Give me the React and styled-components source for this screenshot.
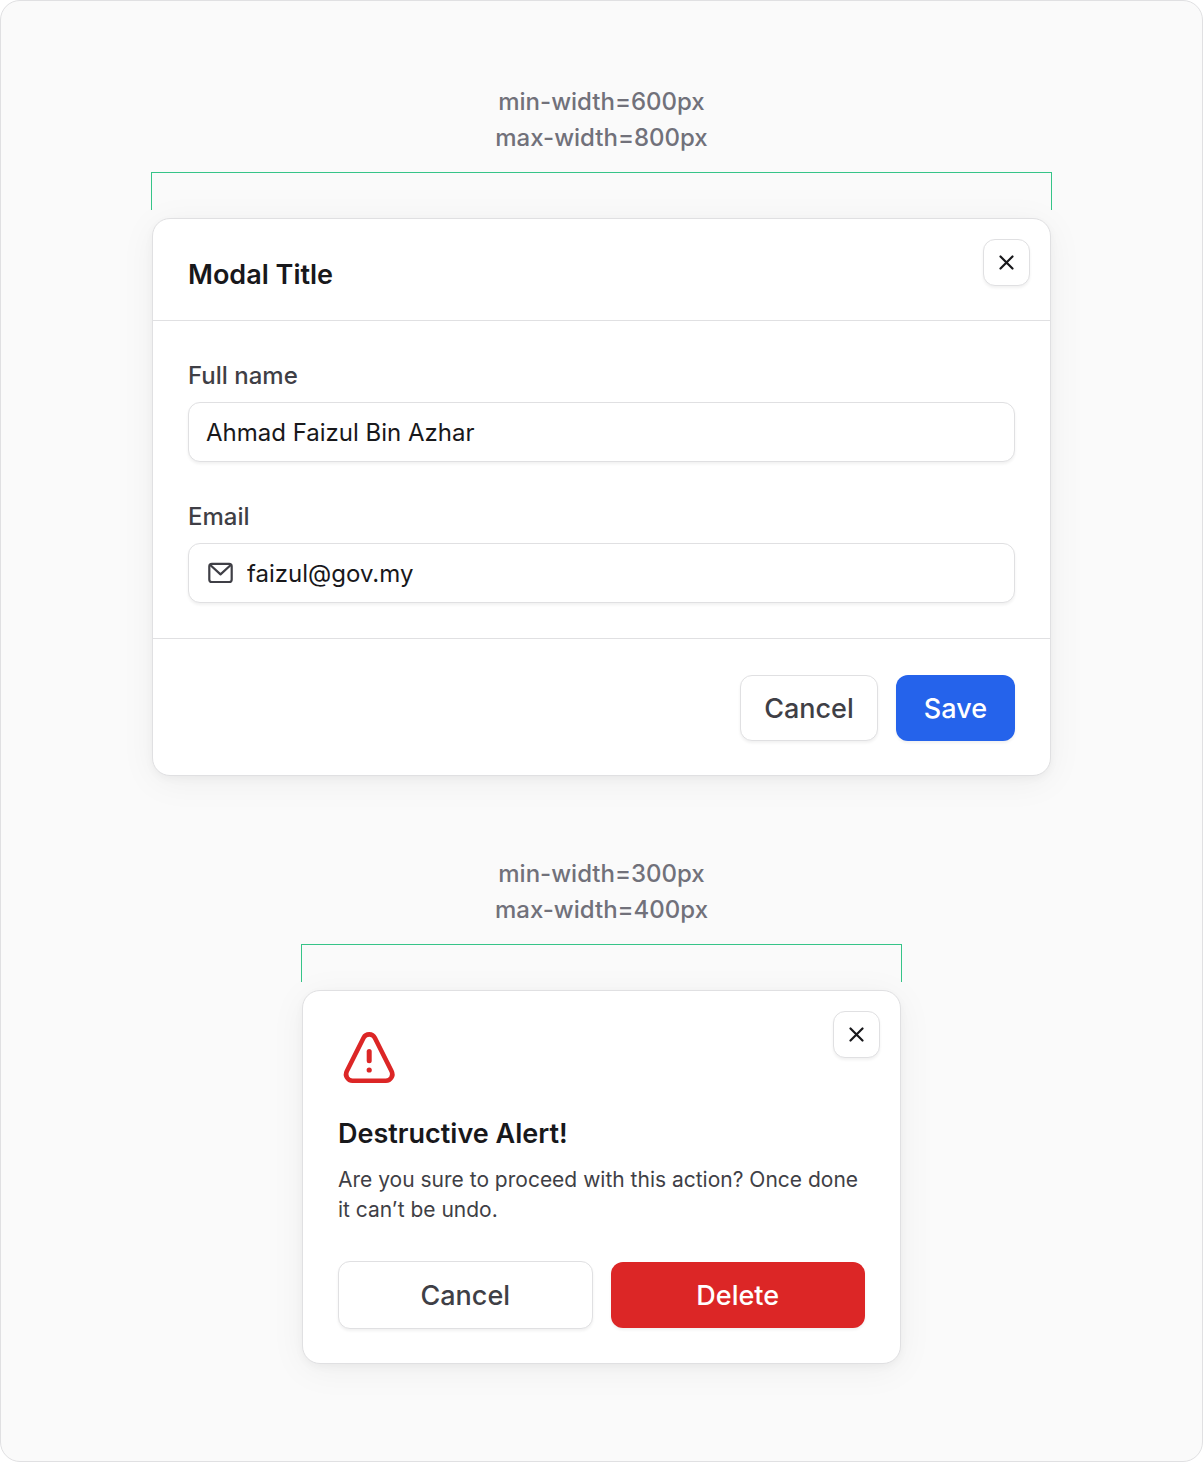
import { useState } from 'react'
import styled, { createGlobalStyle } from 'styled-components'

export default function App() {
  const [fullName, setFullName] = useState('Ahmad Faizul Bin Azhar')
  const [email, setEmail] = useState('faizul@gov.my')

  return (
    <>
      <GlobalStyle />
      <Frame>
        <Spec $width={901}>
          <SpecText>
            min-width=600px
            <br />
            max-width=800px
          </SpecText>
          <Bracket />
          <Card role="dialog" aria-labelledby="modal-title">
            <ModalHeader>
              <ModalTitle id="modal-title">Modal Title</ModalTitle>
              <CloseButton />
            </ModalHeader>
            <ModalBody>
              <Field>
                <Label htmlFor="full-name">Full name</Label>
                <InputBox>
                  <Input
                    id="full-name"
                    type="text"
                    value={fullName}
                    onChange={(e) => setFullName(e.target.value)}
                  />
                </InputBox>
              </Field>
              <Field>
                <Label htmlFor="email">Email</Label>
                <InputBox>
                  <MailIcon />
                  <Input
                    id="email"
                    type="email"
                    value={email}
                    onChange={(e) => setEmail(e.target.value)}
                  />
                </InputBox>
              </Field>
            </ModalBody>
            <ModalFooter>
              <OutlineButton type="button">Cancel</OutlineButton>
              <SolidButton type="button" $color="#2563eb">Save</SolidButton>
            </ModalFooter>
          </Card>
        </Spec>

        <Spec $width={601}>
          <SpecText>
            min-width=300px
            <br />
            max-width=400px
          </SpecText>
          <Bracket />
          <Card role="alertdialog" aria-labelledby="alert-title" aria-describedby="alert-text">
            <AlertHeader>
              <WarningIcon />
              <CloseButton />
            </AlertHeader>
            <AlertBody>
              <Title id="alert-title">Destructive Alert!</Title>
              <AlertText id="alert-text">
                Are you sure to proceed with this action? Once done it can’t be undo.
              </AlertText>
              <AlertActions>
                <OutlineButton type="button" $tall>Cancel</OutlineButton>
                <SolidButton type="button" $color="#dc2626">Delete</SolidButton>
              </AlertActions>
            </AlertBody>
          </Card>
        </Spec>
      </Frame>
    </>
  )
}

function CloseButton() {
  return (
    <IconButton type="button" aria-label="Close">
      <svg width="15" height="15" viewBox="0 0 15 15" fill="none" aria-hidden="true">
        <path
          d="M1.5 1.5L13.5 13.5M13.5 1.5L1.5 13.5"
          stroke="#18181b"
          strokeWidth="2.2"
          strokeLinecap="round"
        />
      </svg>
    </IconButton>
  )
}

function MailIcon() {
  return (
    <Icon width="30" height="30" viewBox="0 0 30 30" fill="none" aria-hidden="true">
      <g stroke="#3f3f46" strokeWidth="2.2" strokeLinejoin="round">
        <rect x="3.3" y="5.8" width="22.4" height="18.2" rx="2.6" />
        <path d="M4 6.8L14.5 16.4L25 6.8" />
      </g>
    </Icon>
  )
}

function WarningIcon() {
  return (
    <AlertIcon width="63" height="63" viewBox="0 0 63 63" fill="none" aria-hidden="true">
      <path
        d="M25.6 10.8L8.8 44.2A6.5 6.5 0 0 0 14.6 53.7H47.8A6.5 6.5 0 0 0 53.6 44.2L36.8 10.8A6.3 6.3 0 0 0 25.6 10.8Z"
        stroke="#dc2626"
        strokeWidth="4.6"
      />
      <path d="M31.2 24.6V33.8" stroke="#dc2626" strokeWidth="5" strokeLinecap="round" />
      <circle cx="31.2" cy="43" r="2.6" fill="#dc2626" />
    </AlertIcon>
  )
}

const GlobalStyle = createGlobalStyle`
  *, *::before, *::after {
    box-sizing: border-box;
  }
  body {
    margin: 0;
    background: #fff;
    color: #18181b;
    font-family: Inter, sans-serif;
  }
  h2, p {
    margin: 0;
  }
`
const Frame = styled.main`
  display: flex;
  flex-direction: column;
  align-items: center;
  gap: 80px;
  padding: 83px 24px 97px;
  border: 1px solid #e0e0e2;
  border-radius: 20px;
  background: #fafafa;
`
const Spec = styled.section`
  width: 100%;
  max-width: ${(props) => props.$width}px;
`
const SpecText = styled.p`
  color: #71717a;
  font-size: 24px;
  font-weight: 500;
  line-height: 36px;
  text-align: center;
`
const Bracket = styled.div`
  height: 38px;
  margin: 16px 0 8px;
  border: 1px solid #36c488;
  border-bottom: 0;
`
const Card = styled.div`
  margin: 0 1px;
  border: 1px solid #e0e0e2;
  border-radius: 18px;
  background: #fff;
  box-shadow: 0 6px 36px rgba(0, 0, 0, 0.05), 0 3px 9px rgba(0, 0, 0, 0.04);
`
const ModalHeader = styled.header`
  display: flex;
  align-items: flex-start;
  justify-content: space-between;
  padding: 20px 20px 25px 35px;
  border-bottom: 1px solid #e0e0e2;
`
const Title = styled.h2`
  font-size: 27px;
  font-weight: 600;
  line-height: 40px;
`
const ModalTitle = styled(Title)`
  margin-top: 16px;
`
const IconButton = styled.button`
  display: flex;
  align-items: center;
  justify-content: center;
  width: 47px;
  height: 47px;
  padding: 0;
  border: 1px solid #e0e0e2;
  border-radius: 12px;
  background: #fff;
  box-shadow: 0 2px 3px rgba(0, 0, 0, 0.06);
  cursor: pointer;
`
const ModalBody = styled.div`
  display: flex;
  flex-direction: column;
  gap: 37px;
  padding: 37px 35px 35px;
`
const Field = styled.div`
  display: flex;
  flex-direction: column;
  gap: 8px;
`
const Label = styled.label`
  color: #3f3f46;
  font-size: 24px;
  font-weight: 500;
  line-height: 36px;
`
const InputBox = styled.div`
  display: flex;
  align-items: center;
  gap: 11px;
  height: 60px;
  padding: 0 17px;
  border: 1px solid #e0e0e2;
  border-radius: 12px;
  background: #fff;
  box-shadow: 0 2px 3px rgba(0, 0, 0, 0.06);
`
const Input = styled.input`
  flex: 1;
  min-width: 0;
  padding: 2px 0 0;
  border: 0;
  outline: 0;
  background: transparent;
  color: #18181b;
  font-family: inherit;
  font-size: 24px;
  line-height: 36px;
`
const Icon = styled.svg`
  flex-shrink: 0;
`
const AlertIcon = styled(Icon)`
  margin-top: 16px;
`
const ModalFooter = styled.footer`
  display: flex;
  justify-content: flex-end;
  gap: 18px;
  padding: 36px 35px 34px;
  border-top: 1px solid #e0e0e2;
`
const Button = styled.button`
  height: 66px;
  border-radius: 12px;
  font-family: inherit;
  font-size: 27px;
  font-weight: 500;
  line-height: 36px;
  box-shadow: 0 2px 3px rgba(0, 0, 0, 0.06);
  cursor: pointer;
`
const OutlineButton = styled(Button)`
  height: ${(props) => (props.$tall ? 68 : 66)}px;
  padding: 2px 23px 0;
  border: 1px solid #e0e0e2;
  background: #fff;
  color: #3f3f46;
`
const SolidButton = styled(Button)`
  padding: 2px 28px 0;
  border: 0;
  background: ${(props) => props.$color};
  color: #fff;
`
const AlertHeader = styled.header`
  display: flex;
  align-items: flex-start;
  justify-content: space-between;
  padding: 20px 20px 24px 35px;
`
const AlertBody = styled.div`
  padding: 0 35px 34px;
`
const AlertText = styled.p`
  margin-top: 11px;
  color: #3f3f46;
  font-size: 21px;
  line-height: 30px;
`
const AlertActions = styled.div`
  display: grid;
  grid-template-columns: 1fr 1fr;
  align-items: center;
  gap: 18px;
  margin-top: 36px;
`
